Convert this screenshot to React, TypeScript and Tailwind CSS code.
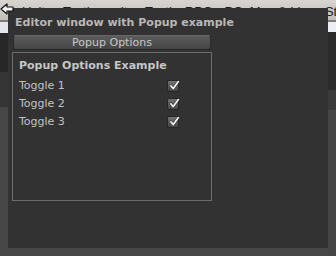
const toggles = ['Toggle 1', 'Toggle 2', 'Toggle 3'];

function CheckBox() {
  return (
    <span className="relative flex h-[12px] w-[12px] items-center justify-center rounded-[2px] border border-[#262626] bg-gradient-to-b from-[#747474] to-[#474747]">
      <svg width="11" height="11" viewBox="0 0 11 11" className="absolute -top-[1px] left-[1px]">
        <path d="M1.8 5.8 L4.3 8.6 L9.4 1.6" fill="none" stroke="#1c1c1c" strokeWidth="3" strokeLinecap="round" strokeLinejoin="round" opacity="0.5" />
        <path d="M1.8 5.8 L4.3 8.6 L9.4 1.6" fill="none" stroke="#f4f4f4" strokeWidth="1.7" strokeLinecap="round" strokeLinejoin="round" />
      </svg>
    </span>
  );
}

function Backdrop() {
  return (
    <div className="flex h-[256px] w-[336px] flex-col bg-[#474747]">
      <div className="h-[20px] overflow-hidden bg-gradient-to-b from-[#d8d4d0] to-[#c2beba] pl-[22px] pt-[4px] font-['Liberation_Sans',sans-serif] text-[13px] leading-[15px] whitespace-nowrap text-[#1e1a2a]">
        Unity - Tactics.unity - TacticsRPG - PC, Mac &amp; Linux Standalone
      </div>
      <div className="h-[2px] bg-[#7c7c7c]" />
      <div className="flex flex-1">
        <div className="flex w-[8px] flex-col">
          <div className="h-[11px] bg-[#e4e6ee]" />
          <div className="h-[39px] bg-[#272727]" />
          <div className="h-[35px] bg-[#353535]" />
          <div className="flex-1 bg-[#474747]" />
        </div>
        <div className="flex-1" />
        <div className="flex w-[8px] flex-col">
          <div className="h-[10px] bg-[#eceef6]" />
          <div className="h-[58px] bg-[#2b2b2b]" />
          <div className="h-[20px] bg-[#3a3a3a]" />
          <div className="flex-1 bg-[#454545]" />
        </div>
      </div>
    </div>
  );
}

export default function App() {
  return (
    <div className="relative h-[256px] w-[336px] overflow-hidden font-['DejaVu_Sans',sans-serif]">
      <Backdrop />

      {/* floating editor window */}
      <div className="absolute left-[8px] top-[8px] flex h-[240px] w-[320px] flex-col bg-[#323232] px-[4px] pt-[7px]">
        <div className="ml-[3px] text-[11px] font-bold leading-[16px] text-[#b8b8b8]">
          Editor window with Popup example
        </div>
        <button className="mx-[1px] mt-[4px] h-[15px] w-[198px] rounded-[3px] border border-[#2a2a2a] border-t-[#666] bg-gradient-to-b from-[#5c5c5c] to-[#454545] pt-[1px] text-center text-[11px] leading-[12px] text-[#c8c8c8]">
          Popup Options
        </button>
        <div className="mt-[2px] flex h-[149px] w-[200px] flex-col border border-[#6c6c6c] pl-[6px] pt-[5px]">
          <div className="text-[11px] font-bold leading-[16px] text-[#c6c6c6]">Popup Options Example</div>
          <div className="mt-[3px] flex flex-col">
            {toggles.map((t) => (
              <div key={t} className="flex h-[18px] items-center">
                <span className="w-[148px] text-[11px] leading-[18px] text-[#c2c2c2]">{t}</span>
                <CheckBox />
              </div>
            ))}
          </div>
        </div>
      </div>

      {/* back arrow cursor over the corner */}
      <svg width="14" height="12" viewBox="0 0 14 12" className="absolute left-0 top-[3px]">
        <path d="M1 6 L7 1 L7 4 L13 4 L13 8 L7 8 L7 11 Z" fill="#f4f4f4" stroke="#111" strokeWidth="1.2" strokeLinejoin="round" />
      </svg>
    </div>
  );
}
